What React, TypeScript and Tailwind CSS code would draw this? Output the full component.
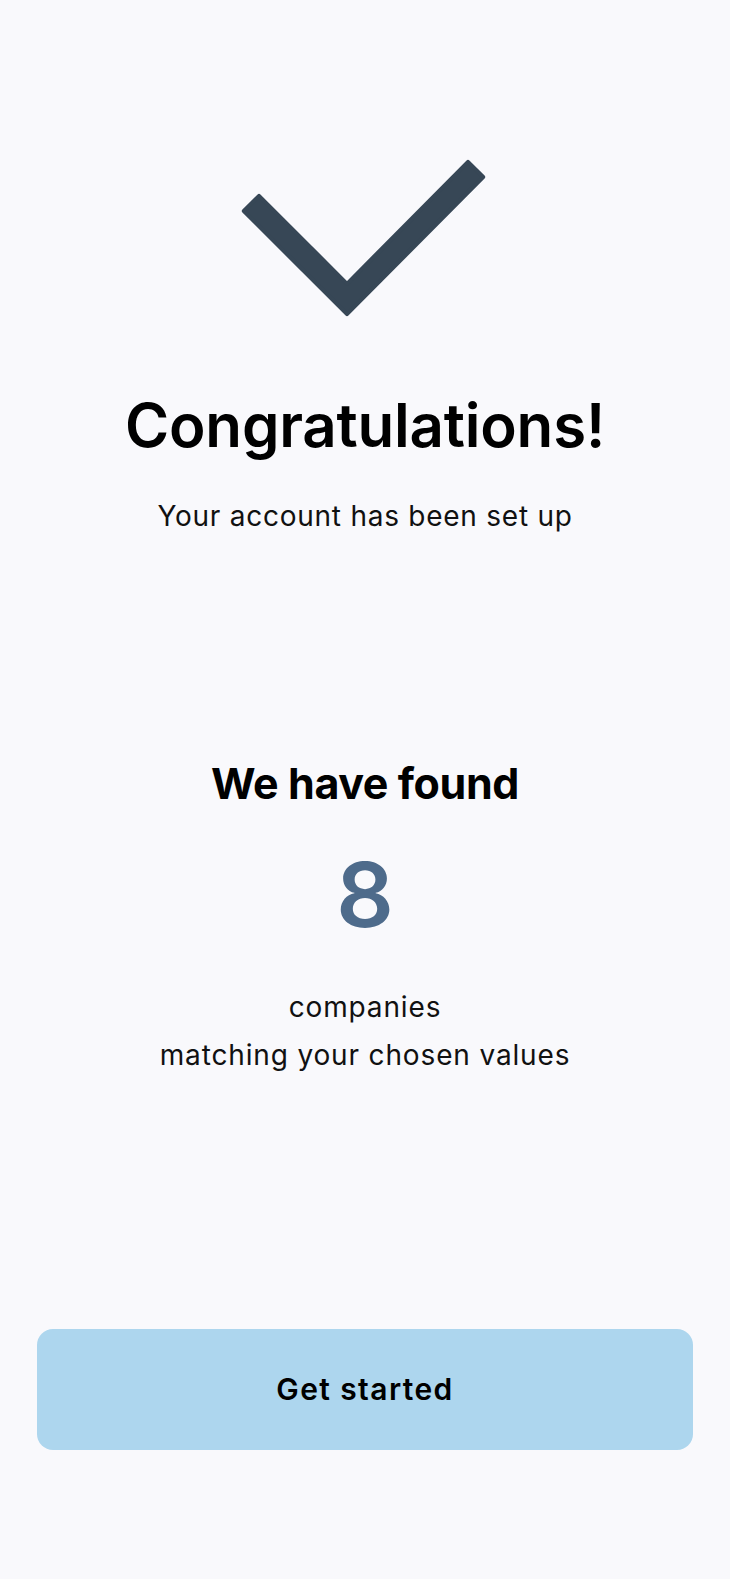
export default function App() {
  return (
    <div
      className="min-h-[1579px] w-full bg-[#f9f9fc] flex flex-col items-center text-black"
      style={{ fontFamily: 'Inter, "Noto Sans", sans-serif' }}
    >
      {/* check mark */}
      <svg
        className="mt-[150px] block"
        width="250"
        height="170"
        viewBox="0 0 250 170"
        fill="none"
      >
        <polygon
          points="19.01,45.81 107,133.8 227.99,11.81 243.19,27.01 107,164.2 3.81,61.01"
          fill="#374756"
          stroke="#374756"
          strokeWidth="4"
          strokeLinejoin="round"
        />
      </svg>

      <h1 className="mt-[75px] text-[60px] leading-[60px] font-semibold tracking-[-0.2px]">
        Congratulations!
      </h1>
      <p className="mt-[47px] text-[28px] leading-[28px] font-normal tracking-[0.75px] text-[#111]">
        Your account has been set up
      </p>

      <h2 className="mt-[231px] text-[43px] leading-[44px] font-bold tracking-[-0.4px]">
        We have found
      </h2>
      <div className="mt-[45px] text-[90px] leading-[90px] font-semibold text-[#4e6b8b]">8</div>
      <p className="mt-[43px] text-[28px] leading-[48px] text-center tracking-[0.85px] text-[#111]">
        companies
        <br />
        matching your chosen values
      </p>

      <div className="mt-[250px] w-full px-[37px]">
        <button className="w-full h-[121px] rounded-2xl bg-[#add6ee] flex items-center justify-center text-[30px] font-semibold tracking-[1.4px] text-black">
          Get started
        </button>
      </div>
    </div>
  )
}
